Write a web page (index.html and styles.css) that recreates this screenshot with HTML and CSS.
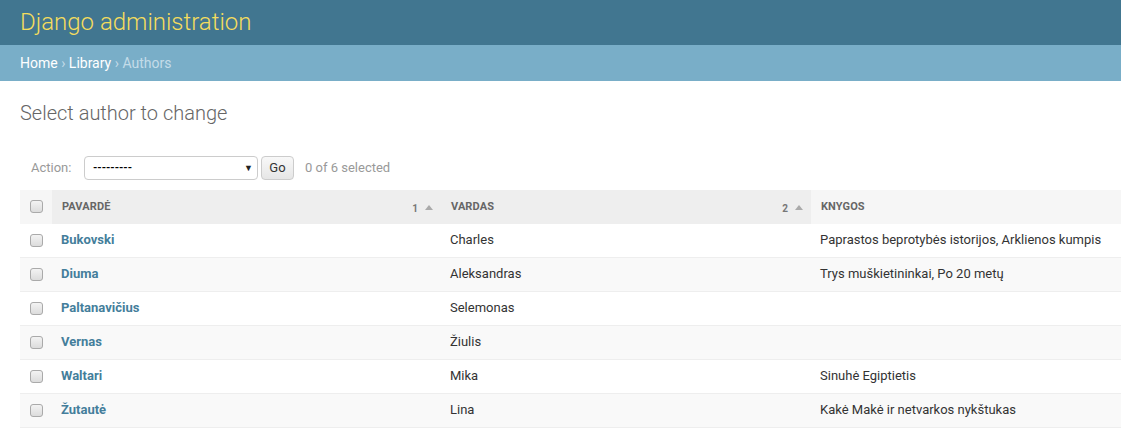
FILE: index.html
```html
<!DOCTYPE html>
<html lang="lt">
<head>
<meta charset="utf-8">
<title>Select author to change | Django site admin</title>
<link rel="stylesheet" href="styles.css">
</head>
<body>
<div class="header">
  <h1 class="site-name">Django administration</h1>
</div>
<div class="breadcrumbs">
  <a href="#">Home</a> › <a href="#">Library</a> › Authors
</div>
<div class="content">
  <h1 class="title">Select author to change</h1>
  <div class="actions">
    <span class="action-label">Action:</span>
    <div class="select"><span class="select-text">---------</span><span class="select-arrow">▼</span></div>
    <button class="go">Go</button>
    <span class="counter">0 of 6 selected</span>
  </div>
  <table class="results">
    <colgroup>
      <col class="c-check"><col class="c-last"><col class="c-first"><col class="c-books">
    </colgroup>
    <thead>
      <tr>
        <th class="check-col"><span class="cb"></span></th>
        <th class="sorted"><div class="th-inner"><span class="th-text">Pavardė</span><span class="sortopts"><span class="prio">1</span><span class="arrow"></span></span></div></th>
        <th class="sorted"><div class="th-inner"><span class="th-text">Vardas</span><span class="sortopts"><span class="prio">2</span><span class="arrow"></span></span></div></th>
        <th><div class="th-inner"><span class="th-text">Knygos</span></div></th>
      </tr>
    </thead>
    <tbody>
      <tr><td class="check-col"><span class="cb"></span></td><th class="name"><a href="#">Bukovski</a></th><td>Charles</td><td>Paprastos beprotybės istorijos, Arklienos kumpis</td></tr>
      <tr><td class="check-col"><span class="cb"></span></td><th class="name"><a href="#">Diuma</a></th><td>Aleksandras</td><td>Trys muškietininkai, Po 20 metų</td></tr>
      <tr><td class="check-col"><span class="cb"></span></td><th class="name"><a href="#">Paltanavičius</a></th><td>Selemonas</td><td></td></tr>
      <tr><td class="check-col"><span class="cb"></span></td><th class="name"><a href="#">Vernas</a></th><td>Žiulis</td><td></td></tr>
      <tr><td class="check-col"><span class="cb"></span></td><th class="name"><a href="#">Waltari</a></th><td>Mika</td><td>Sinuhė Egiptietis</td></tr>
      <tr><td class="check-col"><span class="cb"></span></td><th class="name"><a href="#">Žutautė</a></th><td>Lina</td><td>Kakė Makė ir netvarkos nykštukas</td></tr>
    </tbody>
  </table>
</div>
</body>
</html>
```

FILE: styles.css
```css
html, body {
  margin: 0;
  padding: 0;
}
body {
  font-family: Roboto, "Liberation Sans", sans-serif;
  font-size: 14px;
  color: #333;
  background: #fff;
  overflow: hidden;
}
a {
  text-decoration: none;
}
.header {
  background: #417690;
  padding: 10px 20px;
  height: 25px;
}
.site-name {
  margin: 0;
  font-size: 24px;
  line-height: 25px;
  font-weight: 300;
  color: #f5dd5d;
}
.breadcrumbs {
  background: #79aec8;
  padding: 10px 20px;
  height: 16px;
  line-height: 16px;
  font-size: 14px;
  color: #c4dce8;
}
.breadcrumbs a {
  color: #fff;
}
.content {
  padding: 20px 0 0 20px;
}
.title {
  margin: 0 0 20px;
  font-size: 20px;
  line-height: 24px;
  font-weight: 300;
  color: #666;
}
.actions {
  display: flex;
  align-items: center;
  padding: 11px 10px 10px;
  height: 24px;
  font-size: 13px;
}
.action-label {
  color: #999;
  margin-left: 1px;
  width: 53px;
  padding-bottom: 2px;
}
.select {
  height: 22px;
  border: 1px solid #ccc;
  border-radius: 4px;
  display: flex;
  align-items: center;
  justify-content: space-between;
  padding: 0 4px 0 8px;
  box-sizing: content-box;
  width: 160px;
  font-size: 11px;
  color: #000;
}
.select-text {
  font-weight: bold;
  padding-bottom: 2px;
}
.select-arrow {
  font-size: 9px;
  color: #222;
}
.go {
  margin-left: 3px;
  height: 24px;
  width: 33px;
  padding: 0 0 1px;
  border: 1px solid #ccc;
  border-radius: 4px;
  background: linear-gradient(#f8f8f8, #e6e6e6);
  font-family: Roboto, "Liberation Sans", sans-serif;
  font-size: 13px;
  color: #333;
}
.counter {
  margin-left: 11px;
  color: #999;
  padding-bottom: 2px;
}
.results {
  border-collapse: collapse;
  table-layout: fixed;
  width: 1101px;
  font-size: 13px;
  border-bottom: 1px solid #e6e6e6;
}
.c-check { width: 32px; }
.c-last { width: 389px; }
.c-first { width: 370px; }
.c-books { width: 310px; }
thead th {
  background: #f6f6f6;
  height: 34px;
  padding: 0;
  text-align: left;
  vertical-align: middle;
}
thead th.sorted {
  background: #eee;
}
.th-inner {
  display: flex;
  align-items: center;
  justify-content: space-between;
  padding: 0 8px 2px 10px;
}
.th-text {
  font-size: 11px;
  font-weight: bold;
  text-transform: uppercase;
  color: #666;
  letter-spacing: 0.1px;
}
.sortopts {
  display: flex;
  align-items: center;
  padding-top: 4px;
}
.prio {
  font-size: 10px;
  font-weight: bold;
  color: #777;
  margin-right: 7px;
}
.arrow {
  width: 0;
  height: 0;
  border-left: 4.5px solid transparent;
  border-right: 4.5px solid transparent;
  border-bottom: 5px solid #aaa;
  margin-top: -2px;
}
.check-col {
  text-align: center;
  padding: 0;
}
.cb {
  display: inline-block;
  width: 11px;
  height: 11px;
  border: 1px solid #aaa;
  border-radius: 3px;
  background: linear-gradient(#f3f3f3, #dcdcdc);
  vertical-align: middle;
  margin-top: -3px;
}
tbody td, tbody th {
  padding: 7px 8px 9px 9px;
  line-height: 17px;
  border-bottom: 1px solid #eee;
  text-align: left;
  vertical-align: middle;
  font-weight: normal;
  color: #333;
  white-space: nowrap;
}
tbody td.check-col {
  padding: 0;
}
tbody tr:nth-child(even) {
  background: #f9f9f9;
}
.name a {
  color: #447e9b;
  font-weight: bold;
}
```
